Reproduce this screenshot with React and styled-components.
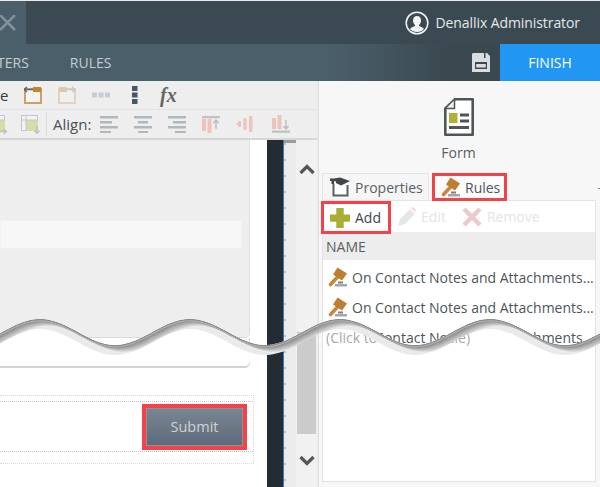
import React from "react";
import styled, { createGlobalStyle } from "styled-components";

const BAND = 10;
const waveY = (x) => 332 - 13 * Math.cos((2 * Math.PI * (x - 40)) / 150);
const wavePoints = (dx = 0, dy = 0) => {
  const pts = [];
  for (let x = -30; x <= 630; x += 3) pts.push([x + dx, +(waveY(x) + dy).toFixed(1)]);
  return pts;
};
const waveLine = (dx = 0, dy = 0) =>
  "M" + wavePoints(dx, dy).map((p) => p.join(" ")).join("L");
const waveBelow = (dx = 0, dy = 0) =>
  waveLine(dx, dy) + `L${630 + dx} ${500 + dy}L${-30 + dx} ${500 + dy}Z`;
const bandPath = () =>
  waveLine(0, 0) +
  "L" +
  wavePoints(0, BAND)
    .reverse()
    .map((p) => p.join(" "))
    .join("L") +
  "Z";

const mix = (t) => {
  const v = Math.round(0x80 + (0xea - 0x80) * t);
  return `rgb(${v},${v},${v})`;
};

const Global = createGlobalStyle`
  html, body { margin: 0; padding: 0; background: #fff; }
  body { font-family: "Open Sans", "Liberation Sans", sans-serif; }
`;

const App_ = styled.div`
  position: relative;
  width: 600px;
  height: 487px;
  overflow: hidden;
  display: flex;
  flex-direction: column;
  padding-top: 1px;
  box-sizing: border-box;
  background: #ececec;
`;
const TopBar = styled.header`
  height: 43px;
  flex: none;
  background: #3b4a52;
  display: flex;
  align-items: center;
  justify-content: space-between;
`;
const CloseBox = styled.div`
  width: 26px;
  height: 100%;
  background: #4a5f6a;
  display: flex;
  align-items: center;
`;
const User = styled.div`
  display: flex;
  align-items: center;
  gap: 6px;
  margin-right: 20px;
  color: #e3e8ea;
  font-size: 14px;
  letter-spacing: -0.08px;
`;
const NavBar = styled.nav`
  height: 37px;
  flex: none;
  display: flex;
  align-items: center;
  background: linear-gradient(to right, #4b5f6a 0, #4b5f6a 55%, #3a4850 75%, #3a4850 100%);
`;
const NavItem = styled.span`
  color: #c3ced3;
  font-size: 14px;
  margin-right: 41px;
  &:first-child {
    margin-left: -3px;
  }
`;
const NavSpacer = styled.div`
  flex: 1;
`;
const SaveIcon = styled.svg`
  width: 18px;
  height: 19px;
  margin-right: 10px;
`;
const Finish = styled.button`
  width: 100px;
  height: 100%;
  border: 0;
  background: #2196f3;
  color: #fff;
  font: 14px "Open Sans", sans-serif;
`;
const Body = styled.div`
  flex: 1;
  display: flex;
  min-height: 0;
`;
const LeftPane = styled.div`
  width: 317px;
  flex: none;
  display: flex;
  flex-direction: column;
  background: #fff;
`;
const Toolbar = styled.div`
  height: ${(p) => p.$h}px;
  flex: none;
  box-sizing: border-box;
  background: #eeeeee;
  display: flex;
  align-items: center;
  gap: 16px;
  border-bottom: ${(p) => (p.$last ? "2px solid #d6d6d6" : "1px solid #e3e3e3")};
  overflow: hidden;
  color: #444c50;
  font-size: 15px;
`;
const ClippedLetter = styled.span`
  width: 8px;
  color: #33393d;
  font-size: 15px;
`;
const ToolSvg = styled.svg`
  width: 18px;
  height: 18px;
  flex: none;
  margin-left: ${(p) => p.$ml || 0}px;
`;
const Fx = styled.span`
  width: 18px;
  font: italic bold 20px "Liberation Serif", serif;
  color: #666;
  line-height: 1;
`;
const Divider = styled.div`
  width: 1px;
  height: 24px;
  flex: none;
  background: #dcdcdc;
  margin: 0 -10px 0 -10px;
`;
const AlignLabel = styled.span`
  width: 35px;
  margin-right: -4px;
  color: #4a5257;
  white-space: nowrap;
`;
const Workspace = styled.div`
  flex: 1;
  display: flex;
  min-height: 0;
`;
const Canvas = styled.div`
  width: 267px;
  flex: none;
  display: flex;
  flex-direction: column;
  background: #fff;
`;
const GreyCard = styled.div`
  width: 250px;
  height: 198px;
  box-sizing: border-box;
  flex: none;
  padding-top: 80px;
  background: #eeeeee;
  border-right: 1px solid #dedede;
  border-bottom: 1px solid #dcdcdc;
  border-bottom-right-radius: 5px;
`;
const FieldStrip = styled.div`
  width: 242px;
  height: 29px;
  background: #f7f7f7;
  border: 1px solid #f1f1f1;
  box-sizing: border-box;
  border-radius: 0 2px 2px 0;
`;
const WhiteCard = styled.div`
  width: 250px;
  height: 30px;
  box-sizing: border-box;
  flex: none;
  background: #fff;
  border-right: 1px solid #d8d8d8;
  border-bottom: 2px solid #d2d2d2;
  border-bottom-right-radius: 5px;
`;
const FormOuter = styled.div`
  width: 254px;
  height: 69px;
  margin-top: 27px;
  box-sizing: border-box;
  padding-top: 5px;
  border: 1px dotted #d8d8d8;
  border-left: 0;
`;
const FormRow = styled.div`
  height: 51px;
  box-sizing: border-box;
  border: 1px dotted #c4c4c4;
  border-left: 0;
  border-right: 0;
  display: flex;
  justify-content: flex-end;
  align-items: center;
  padding-right: 6px;
`;
const Highlight = styled.div`
  box-sizing: border-box;
  border: ${(p) => p.$w || 3}px solid #f4424a;
`;
const SubmitOutline = styled(Highlight)`
  width: 105px;
  height: 46px;
`;
const Submit = styled.button`
  width: 100%;
  height: 100%;
  display: block;
  border: 1px solid #8b939b;
  background: linear-gradient(#7a8592, #5f6b7a);
  color: #ccd2d9;
  font: 14.5px "Open Sans", sans-serif;
  padding: 0;
`;
const DarkRail = styled.div`
  width: 17px;
  flex: none;
  box-sizing: border-box;
  background: #232b33;
  border-right: 1px solid #2b7fc4;
`;
const Ruler = styled.div`
  width: 12px;
  flex: none;
  border-top: 3px solid #9c9c9c;
  background:
    repeating-linear-gradient(to bottom, #b9c6d0 0 2px, transparent 2px 16px) 0 0 / 2px 100% no-repeat,
    #ebebeb;
`;
const ScrollCol = styled.div`
  width: 21px;
  flex: none;
  background: #f1f1f1;
  display: flex;
  flex-direction: column;
  align-items: center;
`;
const Chevron = styled.svg`
  width: 16px;
  height: 12px;
  flex: none;
  margin-top: ${(p) => p.$mt}px;
`;
const Thumb = styled.div`
  width: 19px;
  height: 102px;
  flex: none;
  margin-top: 157px;
  background: #cbcbcb;
`;
const RightPane = styled.aside`
  flex: 1;
  display: flex;
  flex-direction: column;
  background: #f7f7f7;
  border-left: 1px solid #dedede;
  margin-left: 1px;
  min-width: 0;
  position: relative;
`;
const Tick = styled.div`
  position: absolute;
  right: 0;
  top: 107px;
  width: 2px;
  height: 1px;
  background: #888;
`;
const FormHead = styled.div`
  height: 92px;
  flex: none;
  box-sizing: border-box;
  padding-top: 17px;
  display: flex;
  flex-direction: column;
  align-items: center;
  gap: 7px;
  padding-right: 2px;
  color: #575e62;
  font-size: 14px;
`;
const Tabs = styled.div`
  display: flex;
  gap: 2px;
  height: 27px;
  flex: none;
  margin-left: 3px;
`;
const PropTab = styled.div`
  width: 107px;
  height: 27px;
  box-sizing: border-box;
  border: 1px solid #e4e4e4;
  border-bottom: 0;
  background: #f6f6f6;
  display: flex;
  align-items: center;
  gap: 5px;
  padding-left: 7px;
  color: #596166;
  font-size: 14px;
`;
const RulesTab = styled(Highlight)`
  width: 75px;
  height: 28px;
  margin-left: 1px;
  display: flex;
  align-items: center;
  gap: 4px;
  padding-left: 6px;
  background: #fbfbfb;
  color: #4f575b;
  font-size: 14px;
  position: relative;
`;
const Panel = styled.div`
  flex: 1;
  margin: 0 4px 5px 3px;
  background: #fff;
  border: 1px solid #e4e4e4;
  min-height: 0;
`;
const PanelTools = styled.div`
  height: 31px;
  display: flex;
  align-items: center;
  font-size: 14px;
`;
const AddOutline = styled(Highlight)`
  width: 70px;
  height: 33px;
  margin: 0 6px 0 -2px;
  flex: none;
  display: flex;
  align-items: center;
  gap: 5px;
  padding-left: 6px;
  color: #3f464a;
  position: relative;
  top: 1px;
`;
const GhostTool = styled.span`
  display: flex;
  align-items: center;
  gap: 5px;
  margin-right: 16px;
  color: #e4e4e4;
`;
const Head = styled.div`
  height: 28px;
  background: #ededed;
  display: flex;
  align-items: center;
  padding-left: 3px;
  color: #596166;
  font-size: 14px;
`;
const Rows = styled.div`
  padding-top: 2px;
`;
const Row = styled.div`
  height: 30px;
  display: flex;
  align-items: center;
  gap: 4px;
  padding-left: 5px;
  color: #4d5559;
  font-size: 14px;
  white-space: nowrap;
`;
const WaveSvg = styled.svg`
  position: absolute;
  left: 0;
  top: 0;
  width: 600px;
  height: 487px;
  pointer-events: none;
`;
const Below = styled.span`
  position: absolute;
  left: 326px;
  top: 328px;
  font-size: 14px;
  line-height: 19px;
  color: #a4a9ac;
  white-space: nowrap;
  clip-path: path("${waveBelow(-326, -328 + BAND)}");
`;

const Gavel = () => (
  <svg width="20" height="20" viewBox="0 0 20 20" style={{ flex: "none" }}>
    <path d="M2.500 17.500 9.500 10" stroke="#c9873c" strokeWidth="3.600" strokeLinecap="round" />
    <path d="M9.500.5 19 6.500 14 13.500 5 7.500Z" fill="#bd7e2f" />
    <rect x="10" y="14.500" width="5" height="2" fill="#7b7f81" />
    <rect x="7" y="17" width="12" height="2.500" fill="#a3a7a9" />
  </svg>
);
const CapIcon = () => (
  <svg width="20" height="20" viewBox="0 0 20 20" style={{ flex: "none" }}>
    <path d="M3.500 7V18.500H17.500V8" fill="#fff" stroke="#5a6063" strokeWidth="2" />
    <path d="M0 1.500H4L10 .5 20 4 14 7 11 8.500 6 6V4.500L4 4V7H1.500V4H0Z" fill="#3f4548" />
  </svg>
);
const Plus = () => (
  <svg width="20" height="20" viewBox="0 0 20 20" style={{ flex: "none" }}>
    <path d="M6.300 0h7.400v6.600H20v7.200h-6.300V20H6.300v-6.200H0V6.600h6.300Z" fill="#a9ad33" />
  </svg>
);
const Pencil = () => (
  <svg width="19" height="20" viewBox="0 0 19 20">
    <path d="M1 19 3 12 13 2 18 7 8 17Z" fill="#e6e6e6" />
    <path d="M14 1 16 0 19 3 18 5Z" fill="#f4d6c6" />
  </svg>
);
const RemoveX = () => (
  <svg width="20" height="20" viewBox="0 0 20 20">
    <path d="M2 2 18 18M18 2 2 18" stroke="#eccaca" strokeWidth="4.500" />
  </svg>
);
const FormIcon = () => (
  <svg width="30" height="38" viewBox="0 0 30 38" style={{ flex: "none" }}>
    <path d="M11 1.300H28.700V36.700H1.300V10.500Z" fill="#fff" stroke="#4e5659" strokeWidth="2.600" strokeLinejoin="round" />
    <path d="M10.500 2V10.500H2" fill="#eee" stroke="#4e5659" strokeWidth="1.500" />
    <rect x="5" y="15" width="8.500" height="10" fill="#b0b034" />
    <rect x="16" y="15.500" width="9" height="3" fill="#4e5659" />
    <rect x="16" y="21.500" width="9" height="3" fill="#4e5659" />
    <rect x="5" y="28" width="20" height="3" fill="#4e5659" />
  </svg>
);
const TabFolder = ({ right, faded }) => (
  <ToolSvg viewBox="0 0 18 18" style={{ opacity: faded ? 0.35 : 1 }}>
    <rect x="1" y="3" width="16" height="14" fill="#f4f4f4" stroke="#cf9f68" strokeWidth="2" />
    <rect x={right ? 1 : 9} y="1" width="8" height="5" fill="#c6822f" />
    {right ? (
      <path d="M8 3.500h9M14 1l3 2.500-3 2.500" stroke="#79838a" strokeWidth="1.400" fill="none" />
    ) : (
      <path d="M9 3.500H0M3 1 0 3.500 3 6" stroke="#5b6870" strokeWidth="1.400" fill="none" />
    )}
  </ToolSvg>
);
const HDots = () => (
  <ToolSvg viewBox="0 0 18 18">
    <path d="M0 6.500h5v5H0zM6.500 6.500h5v5h-5zM13 6.500h5v5h-5z" fill="#c8cccf" />
  </ToolSvg>
);
const VDots = () => (
  <ToolSvg viewBox="0 0 18 18">
    <path d="M6 0h5.500v5H6zM6 6.500h5.500v5H6zM6 13h5.500v5H6z" fill="#4a5568" />
  </ToolSvg>
);
const TableIcon = ({ ml, right }) => (
  <ToolSvg $ml={ml} viewBox="0 0 19 19" style={{ width: 19, height: 19 }}>
    <rect x=".5" y=".5" width="16" height="15" fill="#f2f2f2" stroke="#c4c7c9" />
    <rect x="5" y="5" width="12" height="11" fill="#dadaa8" />
    <path d="M.5 5H17M5 .5V16" stroke="#c4c7c9" />
    {right ? (
      <path d="M10 16.500h8M15.500 14l3 2.500-3 2.500" stroke="#bcc1c4" strokeWidth="1.300" fill="none" />
    ) : (
      <path d="M16 11v7M13.500 15.500 16 18.500l2.500-3" stroke="#bcc1c4" strokeWidth="1.300" fill="none" />
    )}
  </ToolSvg>
);
const AlignIcon = ({ kind }) => {
  const xs = {
    left: [[0, 18], [0, 12], [0, 18], [0, 11]],
    center: [[0, 18], [4, 10], [0, 18], [4, 10]],
    right: [[0, 18], [5, 13], [0, 18], [7, 11]],
  }[kind];
  return (
    <ToolSvg viewBox="0 0 18 18">
      {xs.map(([x, w], i) => (
        <rect key={i} x={x} y={1 + i * 5} width={w} height="2.500" fill="#aeb8bd" />
      ))}
    </ToolSvg>
  );
};
const TopAlign = () => (
  <ToolSvg viewBox="0 0 18 18">
    <rect width="18" height="2.300" y="1" fill="#bfc3c5" />
    <rect x="0" y="4" width="4" height="12" fill="#eec4ba" />
    <rect x="5.500" y="4" width="4" height="15" fill="#eec4ba" />
    <path d="M14 14V5M11.500 8 14 5l2.500 3" stroke="#b9bdc0" strokeWidth="1.400" fill="none" />
  </ToolSvg>
);
const MidAlign = () => (
  <ToolSvg viewBox="0 0 20 18" style={{ width: 20 }}>
    <path d="M0 9h20" stroke="#bfc3c5" strokeWidth="1.200" strokeDasharray="2 5" />
    <rect x="2" y="6" width="3" height="6" fill="#eec4ba" />
    <rect x="7.500" y="3" width="3" height="12" fill="#eec4ba" />
    <rect x="13" y="1" width="3.500" height="16" fill="#eec4ba" />
  </ToolSvg>
);
const BotAlign = () => (
  <ToolSvg viewBox="0 0 18 18">
    <rect x="0" y="3" width="4" height="11" fill="#eec4ba" />
    <rect x="5.500" y="0" width="4" height="14" fill="#eec4ba" />
    <path d="M14 5v9M11.500 11 14 14l2.500-3" stroke="#b9bdc0" strokeWidth="1.400" fill="none" />
    <rect width="18" height="2.300" y="15.500" fill="#bfc3c5" />
  </ToolSvg>
);

const SHADOW_STEPS = 12;
const shadowSteps = Array.from({ length: SHADOW_STEPS }, (_, i) => SHADOW_STEPS - 1 - i);

export default function App() {
  return (
    <>
      <Global />
      <App_>
        <TopBar>
          <CloseBox>
            <svg width="16" height="16" viewBox="0 0 16 16">
              <path d="M0 0 15 15M15 0 0 15" stroke="#82929a" strokeWidth="2.600" />
            </svg>
          </CloseBox>
          <User>
            <svg width="24" height="24" viewBox="0 0 24 24">
              <circle cx="12" cy="12" r="10.800" fill="#3b4a52" stroke="#f2f4f5" strokeWidth="1.500" />
              <path d="M12 5c-2.600 0-4 2-4 4.500 0 2 1 3.600 2 4.500v1c-1.500.8-4.200 1.300-5 3 1.700 2 4 3 7 3s5.300-1 7-3c-.8-1.700-3.500-2.200-5-3v-1c1-.9 2-2.500 2-4.500C16 7 14.600 5 12 5Z" fill="#f2f4f5" />
            </svg>
            Denallix Administrator
          </User>
        </TopBar>
        <NavBar>
          <NavItem>TERS</NavItem>
          <NavItem>RULES</NavItem>
          <NavSpacer />
          <SaveIcon viewBox="0 0 18 19">
            <path d="M1 0H12V5H13.500V0H15L18 3V19H0V1Z" fill="#d9dddf" />
            <rect x="3" y="9" width="12" height="7" fill="#3b4a52" />
            <rect x="4.200" y="11" width="9.600" height="3.500" fill="#d9dddf" />
          </SaveIcon>
          <Finish>FINISH</Finish>
        </NavBar>
        <Body>
          <LeftPane>
            <Toolbar $h={29}>
              <ClippedLetter>e</ClippedLetter>
              <TabFolder />
              <TabFolder right faded />
              <HDots />
              <VDots />
              <Fx>fx</Fx>
            </Toolbar>
            <Toolbar $h={30} $last>
              <TableIcon ml={-12} right />
              <TableIcon ml={-2} />
              <Divider />
              <AlignLabel>Align:</AlignLabel>
              <AlignIcon kind="left" />
              <AlignIcon kind="center" />
              <AlignIcon kind="right" />
              <TopAlign />
              <MidAlign />
              <BotAlign />
            </Toolbar>
            <Workspace>
              <Canvas>
                <GreyCard>
                  <FieldStrip />
                </GreyCard>
                <WhiteCard />
                <FormOuter>
                  <FormRow>
                    <SubmitOutline $w={4}>
                      <Submit>Submit</Submit>
                    </SubmitOutline>
                  </FormRow>
                </FormOuter>
              </Canvas>
              <DarkRail />
              <Ruler />
              <ScrollCol>
                <Chevron $mt={23} viewBox="0 0 16 12">
                  <path d="M1.500 10 8 3.500 14.500 10" fill="none" stroke="#555" strokeWidth="3.200" />
                </Chevron>
                <Thumb />
                <Chevron $mt={21} viewBox="0 0 16 12">
                  <path d="M1.500 2 8 8.500 14.500 2" fill="none" stroke="#555" strokeWidth="3.200" />
                </Chevron>
              </ScrollCol>
            </Workspace>
          </LeftPane>
          <RightPane>
            <Tick />
            <FormHead>
              <FormIcon />
              <span>Form</span>
            </FormHead>
            <Tabs>
              <PropTab>
                <CapIcon />
                Properties
              </PropTab>
              <RulesTab>
                <Gavel />
                Rules
              </RulesTab>
            </Tabs>
            <Panel>
              <PanelTools>
                <AddOutline>
                  <Plus />
                  Add
                </AddOutline>
                <GhostTool>
                  <Pencil />
                  Edit
                </GhostTool>
                <GhostTool>
                  <RemoveX />
                  Remove
                </GhostTool>
              </PanelTools>
              <Head>NAME</Head>
              <Rows>
                <Row>
                  <Gavel />
                  On Contact Notes and Attachments...
                </Row>
                <Row>
                  <Gavel />
                  On Contact Notes and Attachments...
                </Row>
                <Row>
                  <Gavel />
                  On Contact Notes and Attachments
                </Row>
              </Rows>
            </Panel>
          </RightPane>
        </Body>
        <WaveSvg viewBox="0 0 600 487">
          <defs>
            <clipPath id="below">
              <path d={waveBelow()} />
            </clipPath>
            <clipPath id="band">
              <path d={bandPath()} />
            </clipPath>
          </defs>
          <g clipPath="url(#below)">
            <rect x="0" y="300" width="249" height="62" fill="#fff" />
            <rect x="323" y="300" width="272" height="62" fill="#fff" />
            <rect x="249" y="300" width="18" height="62" fill="#fff" />
          </g>
          <path d={bandPath()} fill="#eaeaea" />
          <g clipPath="url(#band)">
            {shadowSteps.map((k) => (
              <path
                key={k}
                d={waveLine(k * 0.9, k * 0.52 + 1)}
                fill="none"
                stroke={mix(k / (SHADOW_STEPS - 1))}
                strokeWidth="1.400"
              />
            ))}
            <path d={waveLine(0, 0.6)} fill="none" stroke={mix(0.1)} strokeWidth="1.400" />
            <path d={waveLine(0, 1.800)} fill="none" stroke={mix(0.45)} strokeWidth="1.200" />
          </g>
        </WaveSvg>
        <Below>(Click to add new rule)</Below>
      </App_>
    </>
  );
}
